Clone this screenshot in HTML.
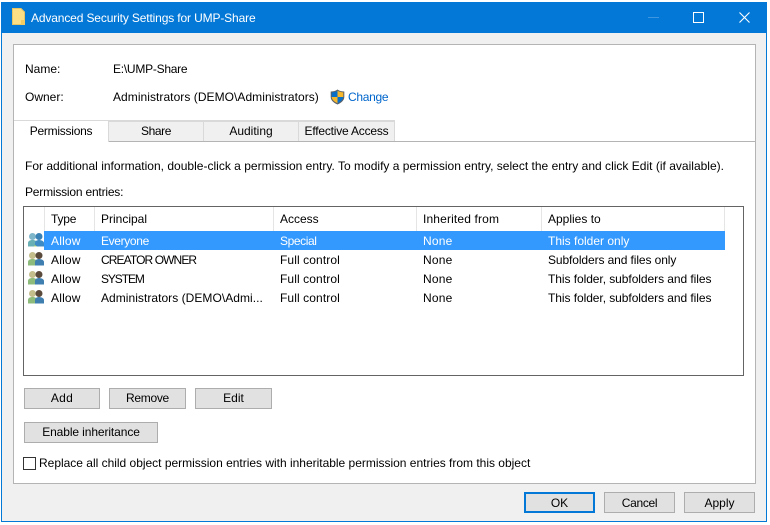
<!DOCTYPE html>
<html><head><meta charset="utf-8"><style>
html,body{margin:0;padding:0;width:770px;height:525px;overflow:hidden;background:#fff}
body{font-family:"Liberation Sans",sans-serif;font-size:12px;color:#000}
.b{position:absolute;box-sizing:border-box}
.t{position:absolute;white-space:nowrap;line-height:16px;height:16px}
.btn{position:absolute;box-sizing:border-box;background:#e1e1e1;border:1px solid #adadad;text-align:center;line-height:19px;white-space:nowrap}
.sep{position:absolute;top:207px;width:1px;height:24px;background:#e5e5e5}
.tab{position:absolute;box-sizing:border-box;top:121px;height:20px;background:#f0f0f0;border:1px solid #d9d9d9;border-bottom:0;border-left:0;text-align:center;line-height:19px;white-space:nowrap}
</style></head><body>
<div class="b" style="left:1px;top:2px;width:766px;height:520px;background:#f0f0f0;border:1px solid #0478d7;border-top:0"></div>
<div class="b" style="left:1px;top:2px;width:766px;height:31px;background:#0478d7"></div>
<svg class="b" style="left:11px;top:8px" width="15" height="18" viewBox="0 0 15 18"><path d="M1.5 .5H10L13.500 4V16.500H1.500Z" fill="#fde085" stroke="#e8c565"/><path d="M10 12H14V17H10Z" fill="#f2cb62"/></svg>
<div class="t" style="left:31px;top:10px;color:#fff;letter-spacing:-.14px">Advanced Security Settings for UMP-Share</div>
<div class="b" style="left:648px;top:17px;width:11px;height:1px;background:#3f96e0"></div>
<div class="b" style="left:693px;top:12px;width:11px;height:11px;border:1px solid #fff"></div>
<svg class="b" style="left:738px;top:11px" width="13" height="13" viewBox="0 0 13 13"><path d="M1.500 1.500L11.500 11.500M11.500 1.500L1.500 11.500" stroke="#fff" stroke-width="1.1" fill="none"/></svg>

<div class="b" style="left:13px;top:44px;width:743px;height:440px;background:#fff;border:1px solid #b4b4b4"></div>
<div class="t" style="left:25px;top:61px">Name:</div>
<div class="t" style="left:113px;top:61px;letter-spacing:-.25px">E:\UMP-Share</div>
<div class="t" style="left:25px;top:89px">Owner:</div>
<div class="t" style="left:113px;top:89px;letter-spacing:.05px">Administrators (DEMO\Administrators)</div>
<svg class="b" style="left:330px;top:89px" width="15" height="16" viewBox="0 0 15 16"><path d="M7.500 .5C5.500 2 3 2.500 .7 2.500V8C.7 11.500 4 14 7.500 15.500C11 14 14.300 11.500 14.300 8V2.500C12 2.500 9.500 2 7.500 .5Z" fill="#5a6068"/><path d="M7.500 1.800V8H1.700V3.400C3.600 3.300 5.800 2.900 7.500 1.800Z" fill="#0a6fc9"/><path d="M7.500 1.800C9.200 2.900 11.400 3.300 13.300 3.400V8H7.500Z" fill="#f7b72c"/><path d="M1.700 8H7.500V14.200C4.600 12.900 1.900 11 1.700 8Z" fill="#f7b72c"/><path d="M7.500 8H13.300C13.100 11 10.400 12.900 7.500 14.200Z" fill="#0a6fc9"/></svg>
<div class="t" style="left:348px;top:89px;color:#0066cc;letter-spacing:-.3px">Change</div>

<div class="b" style="left:14px;top:141px;width:741px;height:1px;background:#b4b4b4"></div>
<div class="b" style="left:14px;top:120px;width:381px;height:1px;background:#d9d9d9"></div>
<div class="tab" style="left:109px;width:95px;letter-spacing:-.4px">Share</div>
<div class="tab" style="left:204px;width:95px">Auditing</div>
<div class="tab" style="left:299px;width:96px;letter-spacing:-.2px">Effective Access</div>
<div class="b" style="left:14px;top:120px;width:95px;height:22px;background:#fff;border:1px solid #d9d9d9;border-bottom:0;border-left:0;text-align:center;line-height:20px;letter-spacing:-.25px">Permissions</div>

<div class="t" style="left:25px;top:158px;letter-spacing:.01px">For additional information, double-click a permission entry. To modify a permission entry, select the entry and click Edit (if available).</div>
<div class="t" style="left:25px;top:184px;letter-spacing:-.2px">Permission entries:</div>

<div class="b" style="left:23px;top:206px;width:721px;height:170px;border:1px solid #646464;background:#fff"></div>
<div class="sep" style="left:44px"></div><div class="sep" style="left:94px"></div><div class="sep" style="left:273px"></div><div class="sep" style="left:416px"></div><div class="sep" style="left:541px"></div><div class="sep" style="left:724px"></div>
<div class="t" style="left:51px;top:211px;letter-spacing:-.2px">Type</div>
<div class="t" style="left:101px;top:211px">Principal</div>
<div class="t" style="left:280px;top:211px">Access</div>
<div class="t" style="left:423px;top:211px;letter-spacing:.15px">Inherited from</div>
<div class="t" style="left:548px;top:211px">Applies to</div>

<div class="b" style="left:44px;top:231px;width:681px;height:19px;background:#3399ff"></div>
<svg class="b" style="left:27px;top:232px" width="18" height="16" viewBox="0 0 18 16"><circle cx="5.500" cy="4.500" r="3.500" fill="#7fb5c9"/><path d="M1 14.500V11C1 9 3 8 5.500 8S10 9 10 11V14.500Z" fill="#69b0b5"/><circle cx="12" cy="4.500" r="3.500" fill="#3a82b5"/><path d="M8 14.500V11C8 9 10 8 12 8S17 9 17 11V14.500Z" fill="#3f8cc4"/><path d="M8 13L10 14.500H7Z" fill="#b8d66a"/></svg>
<svg class="b" style="left:27px;top:251px" width="18" height="16" viewBox="0 0 18 16"><circle cx="5.500" cy="4.500" r="3.500" fill="#c4bd8c"/><path d="M1 14.500V11C1 9 3 8 5.500 8S10 9 10 11V14.500Z" fill="#8cbb7c"/><circle cx="12" cy="4.500" r="3.500" fill="#5a4a3c"/><path d="M8 14.500V11C8 9 10 8 12 8S17 9 17 11V14.500Z" fill="#3f7fb0"/></svg>
<svg class="b" style="left:27px;top:270px" width="18" height="16" viewBox="0 0 18 16"><circle cx="5.500" cy="4.500" r="3.500" fill="#c4bd8c"/><path d="M1 14.500V11C1 9 3 8 5.500 8S10 9 10 11V14.500Z" fill="#8cbb7c"/><circle cx="12" cy="4.500" r="3.500" fill="#5a4a3c"/><path d="M8 14.500V11C8 9 10 8 12 8S17 9 17 11V14.500Z" fill="#3f7fb0"/></svg>
<svg class="b" style="left:27px;top:289px" width="18" height="16" viewBox="0 0 18 16"><circle cx="5.500" cy="4.500" r="3.500" fill="#c4bd8c"/><path d="M1 14.500V11C1 9 3 8 5.500 8S10 9 10 11V14.500Z" fill="#8cbb7c"/><circle cx="12" cy="4.500" r="3.500" fill="#5a4a3c"/><path d="M8 14.500V11C8 9 10 8 12 8S17 9 17 11V14.500Z" fill="#3f7fb0"/></svg>

<div class="t" style="left:51px;top:233px;color:#fff;letter-spacing:.2px">Allow</div><div class="t" style="left:101px;top:233px;color:#fff;letter-spacing:-.35px">Everyone</div><div class="t" style="left:280px;top:233px;color:#fff;letter-spacing:-.4px">Special</div><div class="t" style="left:423px;top:233px;color:#fff;letter-spacing:.2px">None</div><div class="t" style="left:548px;top:233px;color:#fff">This folder only</div>
<div class="t" style="left:51px;top:252px;letter-spacing:.2px">Allow</div><div class="t" style="left:101px;top:252px;letter-spacing:-.9px">CREATOR OWNER</div><div class="t" style="left:280px;top:252px;letter-spacing:.1px">Full control</div><div class="t" style="left:423px;top:252px;letter-spacing:.2px">None</div><div class="t" style="left:548px;top:252px;letter-spacing:-.1px">Subfolders and files only</div>
<div class="t" style="left:51px;top:271px;letter-spacing:.2px">Allow</div><div class="t" style="left:101px;top:271px;letter-spacing:-1.1px">SYSTEM</div><div class="t" style="left:280px;top:271px;letter-spacing:.1px">Full control</div><div class="t" style="left:423px;top:271px;letter-spacing:.2px">None</div><div class="t" style="left:548px;top:271px;letter-spacing:-.06px">This folder, subfolders and files</div>
<div class="t" style="left:51px;top:290px;letter-spacing:.2px">Allow</div><div class="t" style="left:101px;top:290px;letter-spacing:.04px">Administrators (DEMO\Admi...</div><div class="t" style="left:280px;top:290px;letter-spacing:.1px">Full control</div><div class="t" style="left:423px;top:290px;letter-spacing:.2px">None</div><div class="t" style="left:548px;top:290px;letter-spacing:-.06px">This folder, subfolders and files</div>

<div class="btn" style="left:24px;top:388px;width:76px;height:21px;letter-spacing:.3px">Add</div>
<div class="btn" style="left:109px;top:388px;width:77px;height:21px;letter-spacing:-.3px">Remove</div>
<div class="btn" style="left:195px;top:388px;width:77px;height:21px">Edit</div>
<div class="btn" style="left:24px;top:422px;width:134px;height:21px;letter-spacing:-.1px">Enable inheritance</div>
<div class="b" style="left:23px;top:457px;width:13px;height:13px;background:#fff;border:1px solid #333"></div>
<div class="t" style="left:39px;top:455px;letter-spacing:-.01px">Replace all child object permission entries with inheritable permission entries from this object</div>

<div class="btn" style="left:524px;top:492px;width:71px;height:21px;border:2px solid #0478d7;line-height:18px">OK</div>
<div class="btn" style="left:604px;top:492px;width:71px;height:21px;line-height:20px;letter-spacing:-.3px">Cancel</div>
<div class="btn" style="left:684px;top:492px;width:71px;height:21px;line-height:20px">Apply</div>
</body></html>
